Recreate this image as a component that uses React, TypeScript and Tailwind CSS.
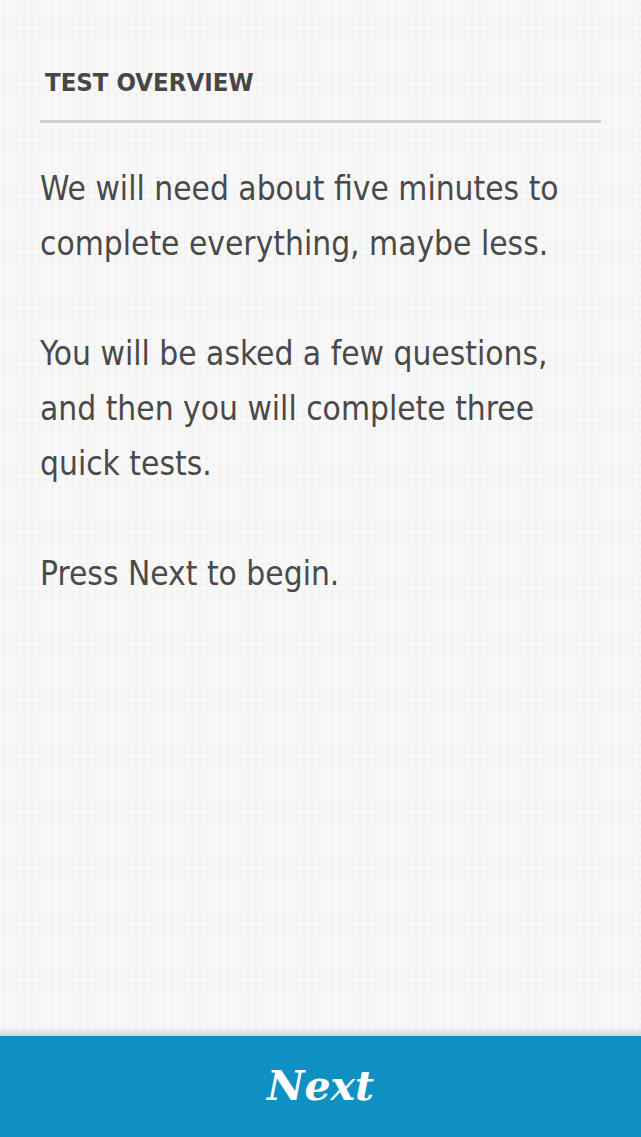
export default function App() {
  return (
    <div className="flex h-[1137px] w-[641px] flex-col overflow-hidden bg-[#f8f8f8] bg-[radial-gradient(circle,#f1f1f1_1.5px,transparent_2px)] bg-[length:7px_7px] font-['DejaVu_Sans_Condensed','DejaVu_Sans',sans-serif] text-[#4a4a4a]">
      <div className="flex-1 px-10 pt-[66px]">
        <div className="border-b-[3px] border-[#cfcfcf] pb-[22px] pl-[5px]">
          <h1 className="text-[25.5px] font-bold leading-[32px] text-[#474747]">TEST OVERVIEW</h1>
        </div>
        <div className="pt-[38px] text-[33.2px] leading-[55px]">
          <p>We will need about five minutes to complete everything, maybe less.</p>
          <p className="mt-[55px]">You will be asked a few questions, and then you will complete three quick tests.</p>
          <p className="mt-[55px]">Press Next to begin.</p>
        </div>
      </div>
      <div className="h-[10px] bg-gradient-to-b from-transparent to-[#d8d8d8]" />
      <button className="flex h-[101px] w-full items-center justify-center bg-[#0f90c2] font-['DejaVu_Serif',serif] text-[41px] font-bold italic text-white">
        Next
      </button>
    </div>
  );
}
